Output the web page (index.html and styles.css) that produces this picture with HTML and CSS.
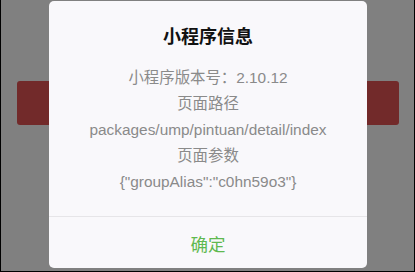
FILE: index.html
```html
<!DOCTYPE html>
<html lang="zh">
<head>
<meta charset="utf-8">
<link rel="stylesheet" href="styles.css">
</head>
<body>
<div class="screen">
  <div class="page">
    <div class="red-bar"></div>
  </div>
  <div class="mask"></div>
  <div class="dialog">
    <div class="title">小程序信息</div>
    <div class="content">
      <div class="line">小程序版本号：2.10.12</div>
      <div class="line">页面路径</div>
      <div class="line">packages/ump/pintuan/detail/index</div>
      <div class="line">页面参数</div>
      <div class="line">{"groupAlias":"c0hn59o3"}</div>
    </div>
    <div class="footer">确定</div>
  </div>
</div>
</body>
</html>
```
FILE: styles.css
```css
html, body {
  margin: 0;
  padding: 0;
}
body {
  width: 415px;
  height: 272px;
  overflow: hidden;
  font-family: "Liberation Sans", "Noto Sans CJK SC", sans-serif;
}
.screen {
  position: relative;
  box-sizing: border-box;
  width: 415px;
  height: 272px;
  border-left: 1px solid #000;
  border-right: 1px solid #000;
  border-bottom: 1px solid #000;
  background: #fff;
}
.page {
  padding: 81px 15px 0 16px;
}
.red-bar {
  height: 44px;
  border-radius: 3px;
  background: #e45454;
}
.mask {
  position: absolute;
  inset: 0;
  background: rgba(0, 0, 0, 0.498);
}
.dialog {
  position: absolute;
  left: 48px;
  top: 1px;
  width: 318px;
  height: 267px;
  border-radius: 5px;
  background: #f9f8fb;
  display: flex;
  flex-direction: column;
  text-align: center;
}
.title {
  padding-top: 24px;
  line-height: 24px;
  font-size: 18px;
  font-weight: bold;
  color: #111;
}
.content {
  padding: 16px 0 21px;
  color: #8a8a8a;
  font-size: 15.4px;
}
.line {
  line-height: 26px;
}
.footer {
  flex: 1;
  border-top: 1px solid #e6e5e8;
  box-sizing: border-box;
  padding-top: 2px;
  display: flex;
  align-items: center;
  justify-content: center;
  font-size: 17.5px;
  color: #5fb94f;
}
```
